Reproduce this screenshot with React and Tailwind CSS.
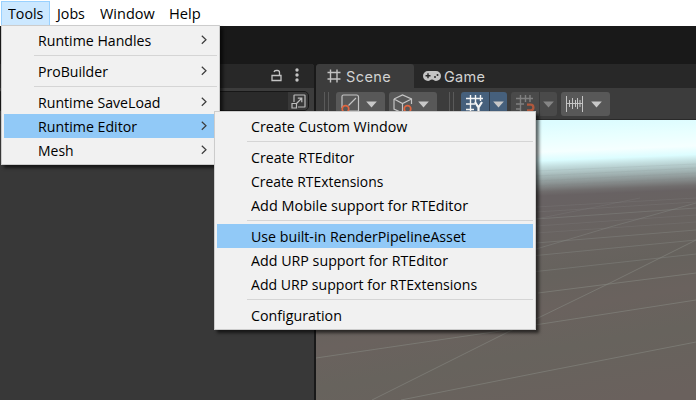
import React from 'react';

const menuFont = "font-['Open_Sans','Noto_Sans',sans-serif]";

function Label({ children, fit = 'scale-x-[0.95]' }) {
  return (
    <span className={`inline-block origin-left whitespace-pre text-[15px] leading-6 text-black ${fit}`}>
      {children}
    </span>
  );
}

function Item({ children, active, arrow, fit }) {
  return (
    <div className={`flex h-6 items-center pl-[34px] pr-[10px] ${active ? 'bg-[#91c9f7]' : ''}`}>
      <Label fit={fit}>{children}</Label>
      {arrow && (
        <svg className="ml-auto" width="6" height="10" viewBox="0 0 6 10" fill="none" stroke="#3c3c3c" strokeWidth="1.2">
          <path d="M.8 .8 5 4.8 .8 8.8" />
        </svg>
      )}
    </div>
  );
}

function Separator() {
  return (
    <div className="flex h-[7px] pl-[30px] pt-[3px]">
      <div className="h-px w-full bg-[#d5d5d5]" />
    </div>
  );
}

function Menu({ className, children }) {
  return (
    <div className={`absolute border border-[#cccccc] bg-[#f1f1f1] p-[2px] shadow-[3px_3px_3px_rgba(0,0,0,0.6)] ${className}`}>
      {children}
    </div>
  );
}

function Arrow({ color = '#c8c8c8' }) {
  return (
    <svg width="11" height="7" viewBox="0 0 11 7">
      <path d="M.2 .5h10.6L5.5 6.5z" fill={color} />
    </svg>
  );
}

function Grip() {
  return (
    <div className="flex h-[22px] w-[5px] justify-between">
      <div className="w-px bg-[#5a5a5a]" />
      <div className="w-px bg-[#5a5a5a]" />
    </div>
  );
}

function GridGlyph({ color, snap }) {
  return (
    <svg width="20" height="20" viewBox="0 0 20 20" fill="none" stroke={color} strokeWidth="1.4">
      <path d={snap ? 'M5.5 1v16M10.5 1v7M15 1v7M1 4.5h17M1 10h8M1 15h5' : 'M5.5 1v16M10.5 1v7M15.5 1v6M1 4.5h17M1 10h9M1 15.5h8'} />
      {snap ? (
        <path d="M12 10.7h3.600a2.800 2.800 0 0 1 0 5.600H12" stroke="#b0583d" strokeWidth="2.300" />
      ) : (
        <path d="m10 8 3.500 5.500 3.500-5.500M13.500 13v6" strokeWidth="2.200" />
      )}
    </svg>
  );
}

function Viewport() {
  return (
    <svg width="380" height="280" viewBox="316 120 380 280" className="block">
      <defs>
        <linearGradient id="sky" gradientUnits="userSpaceOnUse" x1="610" y1="120" x2="613" y2="193">
          <stop offset="0" stopColor="#dcfcff" />
          <stop offset=".2" stopColor="#e8ffff" />
          <stop offset=".4" stopColor="#f5ffff" />
          <stop offset=".52" stopColor="#dcfdff" />
          <stop offset=".6" stopColor="#c4dfe0" />
          <stop offset=".74" stopColor="#a1b2b2" />
          <stop offset=".86" stopColor="#858a8a" />
          <stop offset=".94" stopColor="#706d6d" />
          <stop offset="1" stopColor="#686263" />
        </linearGradient>
        <linearGradient id="ground" gradientUnits="userSpaceOnUse" x1="600" y1="190" x2="635" y2="400">
          <stop offset="0" stopColor="#686263" />
          <stop offset=".25" stopColor="#68635f" />
          <stop offset=".36" stopColor="#66625d" />
          <stop offset=".52" stopColor="#6a625e" />
          <stop offset=".7" stopColor="#67635d" />
          <stop offset="1" stopColor="#6a615d" />
        </linearGradient>
      </defs>
      <path d="M316 120h380v280H316z" fill="url(#ground)" />
      <path d="M316 120h380v70l-380 18z" fill="url(#sky)" />
      <g fill="none" stroke="#858780" strokeWidth="1" strokeOpacity=".6">
        <path d="M401 400 537 373 696 342" />
        <path d="M316 358 500 331 538 324.500 696 300" />
        <path d="M538 293 696 273" />
        <path d="M372 400 510 331 538 318 610 283 696 240" />
      </g>
      <g fill="none" stroke="#858782" strokeWidth="1" strokeOpacity=".45">
        <path d="M536 271.500 696 254" />
        <path d="M536 255.500 696 240" />
        <path d="M536 243 696 230" />
        <path d="M536 219 696 208" />
        <path d="M536 249 570 239 610 227 696 203" />
      </g>
      <g fill="none" stroke="#8c8e8c" strokeWidth="1" strokeOpacity=".2">
        <path d="M536 233 696 222M536 226 696 215M536 212 696 202M536 207 696 198M536 219 640 198" />
      </g>
      <g fill="none" stroke="#788080" strokeWidth="1" strokeOpacity=".1">
        <path d="M536 186 696 178M536 181 696 173M536 176 696 168M536 171 696 164" />
      </g>
    </svg>
  );
}

export default function App() {
  return (
    <div className={`relative flex h-[400px] w-[696px] flex-col overflow-hidden bg-[#191919] ${menuFont}`}>
      <nav className="flex h-[26px] shrink-0 items-start bg-white pl-px pt-px">
        <div className="flex h-[25px] w-[49px] items-center border border-[#99d1ff] bg-[#cce8ff] pl-[6px] pb-[2px]"><Label>Tools</Label></div>
        <div className="flex h-[25px] w-[43px] items-center pl-[7px] pb-[2px]"><Label>Jobs</Label></div>
        <div className="flex h-[25px] w-[69px] items-center pl-[7px] pb-[2px]"><Label fit="scale-x-[0.965]">Window</Label></div>
        <div className="flex h-[25px] items-center pl-[7px] pb-[2px]"><Label fit="scale-x-[0.98]">Help</Label></div>
      </nav>

      <main className="flex grow gap-[2px] pt-[38px]">
        <section className="flex w-[314px] flex-col overflow-hidden rounded-tr-[3px] bg-[#383838]">
          <div className="flex h-[24px] shrink-0 items-center justify-end bg-[#282828] pr-[15px]">
            <svg className="mb-[2px]" width="11" height="13" viewBox="0 0 11 13" fill="none" stroke="#c4c4c4" strokeWidth="1.3">
              <path d="M1 6.500h9v5H1zM8.500 6V3.500Q8.500 1.500 6.500 1.500H5Q3.500 1.500 3 3" />
            </svg>
            <svg className="mb-[2px] ml-[13px]" width="4" height="14" viewBox="0 0 4 14" fill="#c4c4c4">
              <circle cx="2" cy="2" r="1.700" /><circle cx="2" cy="7" r="1.700" /><circle cx="2" cy="12" r="1.700" />
            </svg>
          </div>
          <div className="flex h-[28px] shrink-0 bg-[#3c3c3c] pr-[5px] pt-[3px]">
            <div className="flex h-[20px] grow justify-end overflow-hidden rounded-r-[5px] border border-[#171717] bg-[#2a2a2a]">
              <div className="flex w-[20px] items-center justify-center bg-[#383838]">
                <svg width="15" height="15" viewBox="0 0 15 15" fill="none" stroke="#bcbcbc" strokeWidth="1.200">
                  <path d="M3 8V1.600Q3 1 3.600 1h9.800q.6 0 .6.600v10.800q0 .6-.6.600H7M1 9.500h4.500V14H1zM5.500 9.500l5-5M6.800 4.200h4v4" />
                </svg>
              </div>
            </div>
          </div>
        </section>

        <section className="flex w-[380px] flex-col overflow-hidden rounded-tl-[3px] bg-[#282828]">
          <div className="flex h-[24px] shrink-0 font-['Inter',sans-serif] text-[14.500px] text-[#d2d2d2]">
            <div className="flex w-[98px] items-center rounded-t-[3px] bg-[#3c3c3c] pl-[11px]">
              <svg width="14" height="14" viewBox="0 0 14 14" fill="none" stroke="#c4c4c4" strokeWidth="1.400">
                <path d="M3.500 .5v13M10 .5v13M.5 3.500h13M.5 10h13" />
              </svg>
              <span className="ml-[5px] pt-px tracking-[0.4px]">Scene</span>
            </div>
            <div className="flex items-center pl-[9px]">
              <svg width="18" height="10" viewBox="0 0 18 10">
                <path d="M5 0h8a5 5 0 0 1 0 10c-2 0-2-1.500-4-1.500S7 10 5 10A5 5 0 0 1 5 0" fill="#c4c4c4" />
                <path d="M5 2.200v5M2.500 4.700h5" stroke="#282828" strokeWidth="1.400" />
                <circle cx="12" cy="6" r="1" fill="#282828" /><circle cx="14.500" cy="4" r="1" fill="#282828" />
              </svg>
              <span className="ml-[3px] pt-px tracking-[0.3px]">Game</span>
            </div>
          </div>

          <div className="flex h-[32px] shrink-0 items-start border-b border-[#292929] bg-[#3c3c3c] pl-[8px] pt-[4px]">
            <Grip />
            <div className="ml-[7px] flex h-6 w-[49px] items-center justify-between rounded-[3px] bg-[#585858] pl-[5px] pr-[8px]">
              <svg width="19" height="20" viewBox="0 0 19 20" fill="none" stroke="#c4c4c4" strokeWidth="1.200">
                <path d="M1 14V2.500Q1 1 2.500 1h13Q17.500 1 17.500 3v14H8M7.500 11.500 15 4" />
                <circle cx="4.500" cy="15" r="3.300" stroke="#e06640" strokeWidth="1.700" />
              </svg>
              <Arrow />
            </div>
            <div className="ml-[4px] flex h-6 w-[48px] items-center justify-between rounded-[3px] bg-[#585858] pl-[4px] pr-[8px]">
              <svg width="20" height="20" viewBox="0 0 20 20" fill="none" stroke="#c4c4c4" strokeWidth="1.200">
                <path d="M1 5 9.500 1 18.500 5v5M1 5l8.500 4.500 9-4.500M1 5v10l8.500 4V9.500" />
                <circle cx="14.500" cy="15" r="3.300" stroke="#e06640" strokeWidth="1.700" />
              </svg>
              <Arrow />
            </div>
            <div className="ml-[12px]"><Grip /></div>
            <div className="ml-[7px] flex h-6 w-[46px] items-center rounded-[3px] bg-[#46607c]">
              <div className="flex h-6 w-[29px] items-center justify-center border-r border-[#303d4d]"><GridGlyph color="#f4f4f4" /></div>
              <div className="flex w-[17px] justify-center"><Arrow /></div>
            </div>
            <div className="ml-[4px] flex h-6 w-[46px] items-center rounded-[3px] bg-[#4a4a4a]">
              <div className="flex h-6 w-[29px] items-center justify-center border-r border-[#3a3a3a]"><GridGlyph color="#808080" snap /></div>
              <div className="flex w-[17px] justify-center"><Arrow color="#858585" /></div>
            </div>
            <div className="ml-[4px] flex h-6 w-[49px] items-center justify-between rounded-[3px] bg-[#585858] pl-[5px] pr-[8px]">
              <svg width="17" height="16" viewBox="0 0 17 16" fill="none" stroke="#c4c4c4" strokeWidth="1">
                <path d="M.5 0v16M16.500 0v16M.5 7.500h16M3.500 4v7M6.500 2v11M9.500 4v7M11.500 2v11M14 4v7" />
              </svg>
              <Arrow />
            </div>
          </div>
          <Viewport />
        </section>
      </main>

      <Menu className="left-[1px] top-[25px] w-[219px]">
        <Item arrow fit="scale-x-[0.943]">Runtime Handles</Item>
        <Separator />
        <Item arrow fit="scale-x-[0.94]">ProBuilder</Item>
        <Separator />
        <Item arrow fit="scale-x-[0.943]">Runtime SaveLoad</Item>
        <Item arrow active fit="scale-x-[0.945]">Runtime Editor</Item>
        <Item arrow fit="scale-x-[0.93]">Mesh</Item>
      </Menu>

      <Menu className="left-[214px] top-[111px] w-[322px]">
        <Item>Create Custom Window</Item>
        <Separator />
        <Item fit="scale-x-[0.945]">Create RTEditor</Item>
        <Item fit="scale-x-[0.925]">Create RTExtensions</Item>
        <Item fit="scale-x-[0.961]">Add Mobile support for RTEditor</Item>
        <Separator />
        <Item active fit="scale-x-[0.946]">Use built-in RenderPipelineAsset</Item>
        <Item>Add URP support for RTEditor</Item>
        <Item fit="scale-x-[0.938]">Add URP support for RTExtensions</Item>
        <Separator />
        <Item>Configuration</Item>
      </Menu>
    </div>
  );
}
